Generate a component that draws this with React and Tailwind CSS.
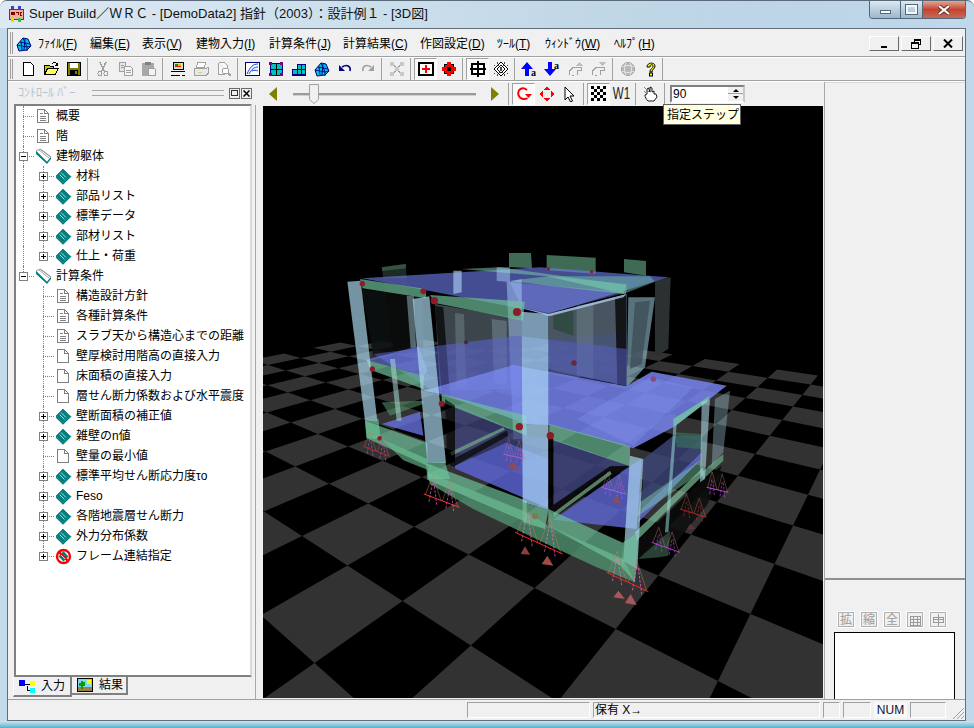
import React from "react";

/* ---------- floor homography ---------- */
function solve(A, b) {
  const n = b.length;
  const M = A.map((r, i) => [...r, b[i]]);
  for (let c = 0; c < n; c++) {
    let p = c;
    for (let r = c + 1; r < n; r++) if (Math.abs(M[r][c]) > Math.abs(M[p][c])) p = r;
    [M[c], M[p]] = [M[p], M[c]];
    for (let r = 0; r < n; r++) {
      if (r === c) continue;
      const f = M[r][c] / M[c][c];
      for (let k = c; k <= n; k++) M[r][k] -= f * M[c][k];
    }
  }
  return M.map((r, i) => r[n] / r[i]);
}
const refs = [[0, 1, 314.5, 664], [3, -1, 718, 682], [3, -3, 774.5, 565], [-2, 0, 302, 537]];
const A = [], B = [];
refs.forEach(([u, v, x, y]) => {
  A.push([u, v, 1, 0, 0, 0, -u * x, -v * x]); B.push(x);
  A.push([0, 0, 0, u, v, 1, -u * y, -v * y]); B.push(y);
});
const H = solve(A, B);
const W = (u, v) => H[6] * u + H[7] * v + 1;
const proj = (u, v) => {
  const w = W(u, v);
  return [(H[0] * u + H[1] * v + H[2]) / w, (H[3] * u + H[4] * v + H[5]) / w];
};
const tiles = [];
for (let i = -12; i < 12; i++) for (let j = -12; j < 12; j++) {
  if (((i + j) % 2 + 2) % 2 !== 1) continue;
  const cs = [[i, j], [i + 1, j], [i + 1, j + 1], [i, j + 1]];
  if (cs.some(([u, v]) => W(u, v) < 0.02)) continue;
  const ps = cs.map(([u, v]) => proj(u, v));
  if (ps.some(([x, y]) => y < 340)) continue;
  tiles.push(ps.map(([x, y]) => `${x.toFixed(1)},${y.toFixed(1)}`).join(" "));
}

/* ---------- building, in 3x coordinates of the crop at (340,240) ---------- */
const G = "rgba(112,196,155,0.68)", GD = "rgba(78,140,108,0.85)", C = "rgba(172,218,240,0.68)";
const polys = [
  ["507,42 573,42 576,88 507,84", "#3f6b55"], ["620,48 767,56 767,104 620,94", "#3f6b55"], ["852,60 918,66 918,110 852,100", "#3f6b55"],
  ["125,85 197,75 200,118 130,118", "#1e2a25"], ["125,85 197,75 198,88 127,96", "#33553f"],
  ["945,125 992,115 985,330 945,355", "#2b3030"],
  ["65,150 250,175 250,340 100,350", "rgba(12,16,16,.85)"],
  ["285,195 545,240 545,450 300,455", "rgba(85,95,105,.72)"],
  ["300,320 545,290 545,450 300,455", "rgba(80,90,170,.35)"],
  ["625,225 860,165 860,440 625,390", "rgba(78,92,104,.92)"],
  ["625,300 860,280 860,440 625,390", "rgba(70,80,150,.35)"],
  ["285,200 310,205 330,470 305,460", "rgba(0,0,0,.7)"], ["345,222 372,226 378,440 350,445", "rgba(150,170,180,.3)"],
  ["455,240 500,246 500,440 462,430", "rgba(150,175,185,.35)"], ["710,200 760,190 760,420 710,410", "rgba(130,150,160,.35)"],
  ["825,175 858,168 858,440 832,440", "rgba(10,10,10,.85)"],
  ["640,225 700,210 700,290 640,270", "rgba(40,70,55,.7)"],
  ["865,175 945,175 915,385 860,445", "rgba(160,210,225,.55)"], ["885,190 930,185 905,375 870,390", "rgba(60,75,85,.75)"],
  ["130,120 200,120 220,320 160,330", "rgba(10,10,10,.7)"], ["200,170 222,172 228,325 212,328", "rgba(170,210,225,.45)"],
  ["65,118 600,85 985,115 625,225 250,152", "rgba(110,124,235,.62)"],
  ["510,130 860,160 625,222 545,205", "rgba(135,150,245,.4)"],
  ["365,90 480,85 860,138 858,165 620,112", "rgba(120,195,170,.55)"],
  ["510,125 625,112 860,135 850,165 625,140", "rgba(115,195,165,.55)"],
  ["625,112 930,112 945,128 850,165", "rgba(110,190,170,.5)"],
  ["340,95 365,95 365,160 340,165", "rgba(180,215,250,.6)"], ["470,85 510,85 510,130 470,125", "rgba(180,215,250,.45)"],
  ["500,130 545,120 548,600 520,600", "rgba(170,205,250,.5)"],
  ["540,205 625,225 860,165 850,175 628,232", "rgba(180,210,245,.75)"],
  ["100,345 530,290 860,330 860,440 520,378 270,450", "rgba(85,95,190,.55)"],
  ["78,362 235,322 262,395 250,412", "rgba(110,125,230,.65)"],
  ["345,495 560,590 625,600 625,660 500,610 345,680", "rgba(65,70,125,.75)"],
  ["640,600 870,680 810,690 640,810", "rgba(60,65,120,.88)"],
  ["910,660 1000,590 1085,590 1085,650 905,810", "rgba(60,70,120,.82)"],
  ["250,455 520,378 860,442 935,398 1160,440 1005,562 880,628 628,558 560,555 305,465", "rgba(118,132,238,.84)"],
  ["710,540 930,415 1060,445 880,620", "rgba(140,155,250,.3)"],
  ["125,555 240,518 250,590", "rgba(105,115,225,.78)"],
  ["125,490 250,485 250,495 150,530", "rgba(90,150,110,.55)"],
  ["895,905 1090,720 1150,700 1100,800 1000,920 985,950 895,960", "rgba(14,14,14,.9)"],
  ["335,685 500,610 625,660 625,808", "rgba(90,100,210,.84)"],
  ["640,842 870,682 905,660 890,870", "rgba(90,100,205,.84)"],
  ["905,810 1065,660 1085,640 1085,660 895,850", "rgba(95,105,215,.8)"],
  ["625,808 810,682 870,680 640,835", "rgba(8,8,10,.9)"],
  ["640,822 810,695 815,705 640,835", "rgba(130,190,150,.65)"],
  ["340,660 500,575 505,590 345,680", "rgba(8,10,8,.75)"],
  ["330,640 490,565 495,572 335,650", "rgba(120,180,140,.65)"],
  ["890,960 1135,712 1145,680 1090,720 895,905", "rgba(10,10,10,.9)"],
  ["125,600 262,660 262,692 190,664", GD],
  ["262,700 560,820 625,860 850,960 885,1030 770,985 620,915 400,810 270,735", GD],
  ["895,960 990,875 985,950 960,955", "rgba(60,100,80,.6)"],
  ["75,545 262,612 262,680 80,598", G], ["258,672 560,785 560,850 262,722", G], ["625,810 850,912 850,985 625,860", G],
  ["890,905 1090,708 1090,685 885,880", "rgba(140,215,175,.62)"],
  ["900,790 1085,660 1085,700 895,830", "rgba(130,210,170,.45)"],
  ["1085,700 1150,645 1150,665 1088,722", "rgba(130,210,170,.55)"],
  ["80,362 252,412 250,450 90,392", G], ["305,465 560,530 560,590 305,490", G], ["628,555 870,622 870,682 628,600", G],
  ["1000,540 1110,470 1100,490 1000,565", "rgba(120,205,160,.72)"], ["1005,580 1085,585 1085,630 1010,625", "rgba(60,130,90,.5)"],
  ["60,120 258,150 258,178 68,148", G], ["270,168 555,188 548,245 285,192", G],
  ["22,128 62,125 112,545 75,545", C], ["218,180 268,172 318,672 262,672", C],
  ["545,218 625,225 625,812 548,790", "rgba(168,212,245,.72)"], ["150,360 165,360 185,545 170,545", "rgba(170,220,210,.55)"],
  ["870,650 910,660 892,990 850,965", C], ["1000,565 1010,555 985,880 975,880", "rgba(150,215,215,.55)"],
  ["1085,490 1110,480 1095,720 1080,730", "rgba(170,215,225,.6)"], ["1125,480 1170,455 1150,640 1115,680", "rgba(170,215,225,.35)"],
  ["625,590 640,600 640,800 625,808", "rgba(0,0,0,.88)"],
  ["315,480 345,500 345,690 322,670", "rgba(0,0,0,.6)"],
  ["75,545 115,540 122,600 80,598", G], ["548,790 625,812 615,870 548,850", G], ["262,672 315,668 330,720 265,720", G], ["850,910 895,880 885,1030 845,985", G],
];
const dots = [[67, 134, 8], [250, 157, 9], [283, 185, 11], [531, 219, 12], [97, 390, 8], [305, 494, 9], [538, 563, 11], [631, 590, 11], [119, 598, 7], [625, 90, 5], [755, 98, 5]];
const dimDots = [[702, 372, 8, "#6c2740"], [940, 420, 8, "#8c4a80"], [378, 310, 6, "#4a2535"], [585, 832, 9, "#7d7a50"]];
const supports = [
  [70, 622, 150, 652, "#e02525", "#d060e0", .8], [252, 765, 358, 805, "#ff3535", "#ff60e0", 1],
  [525, 880, 668, 945, "#ff2525", "#ff70d0", 1], [800, 1000, 925, 1058, "#ff2525", "#ff70d0", 1],
  [1020, 810, 1100, 835, "#e02525", "#e02525", .8], [935, 910, 1020, 940, "#c040e0", "#c040e0", .9],
  [1100, 745, 1165, 760, "#d050f0", "#d050f0", .9], [490, 645, 555, 660, "#e060c0", "#e060c0", .7], [785, 745, 858, 765, "#c060f0", "#c060f0", .8],
];
const tris = [["555,922 570,947 542,945", "#8a3f3f"], ["622,950 640,980 605,975", "#a04a4a"], ["835,1055 855,1080 820,1075", "#a85858"], ["872,1065 890,1098 855,1092", "#a85858"], ["520,668 540,695 500,685", "#8a4a60"], ["830,770 845,795 815,790", "#8a4a60"], ["1050,855 1068,870 1040,872", "#5a3535"]];

function Support({ s }) {
  const [x1, y1, x2, y2, c, d, op] = s;
  const len = x2 - x1, dy = y2 - y1, h = Math.max(50, len * 0.62);
  const px = (t) => x1 + len * t, py = (t) => y1 + dy * t;
  return (
    <g opacity={op} fill="none" strokeWidth="2">
      <polyline points={`${px(.04)},${py(.04)} ${px(.25)},${py(.25) - h} ${px(.48)},${py(.48)}`} stroke="#c08060" opacity=".7" />
      <polyline points={`${px(.52)},${py(.52)} ${px(.72)},${py(.72) - h} ${px(.96)},${py(.96)}`} stroke="#c08060" opacity=".7" />
      <line x1={px(.14)} y1={py(.14) + 18} x2={px(.24)} y2={py(.24) - h + 20} stroke={d} strokeDasharray="8 4" />
      <line x1={px(.36)} y1={py(.36) + 18} x2={px(.28)} y2={py(.28) - h + 20} stroke={d} strokeDasharray="8 4" />
      <line x1={px(.62)} y1={py(.62) + 18} x2={px(.72)} y2={py(.72) - h + 20} stroke={d} strokeDasharray="8 4" />
      <line x1={px(.84)} y1={py(.84) + 18} x2={px(.76)} y2={py(.76) - h + 20} stroke={d} strokeDasharray="8 4" />
      <line x1={x1} y1={y1} x2={x2} y2={y2} stroke={c} strokeWidth="3" />
    </g>
  );
}

function Scene() {
  return (
    <svg viewBox="263 107 560 592" className="block w-[560px] h-[592px]">
      <rect x="263" y="107" width="560" height="592" fill="#000" />
      {tiles.map((p, i) => <polygon key={i} points={p} fill="#323232" />)}
      <g transform="translate(340 240) scale(.33333)">
        {polys.map(([p, f], i) => <polygon key={i} points={p} fill={f} />)}
        {dots.map(([x, y, r], i) => <circle key={i} cx={x} cy={y} r={r} fill="#8c1c2c" />)}
        {dimDots.map(([x, y, r, f], i) => <circle key={i} cx={x} cy={y} r={r} fill={f} />)}
        {supports.map((s, i) => <Support key={i} s={s} />)}
        {tris.map(([p, f], i) => <polygon key={i} points={p} fill={f} />)}
      </g>
    </svg>
  );
}

/* ---------- small icons ---------- */
const S = ({ children, w = 16, h = 16 }) => <svg width={w} height={h} viewBox={`0 0 ${w} ${h}`} shapeRendering="crispEdges" className="block">{children}</svg>;
const Gy = "#a0a0a0";
const icons = {
  new: <S><path d="M3.5 1.5h7l3 3v10h-10z" fill="#fff" stroke="#000" /></S>,
  open: <S><path d="M1.5 13.5v-9h5l1 1h3v8z" fill="#c8c800" stroke="#000" /><path d="M1.5 13.5l3-6h11l-3.5 6z" fill="#ffff60" stroke="#000" /><path d="M9 3c2-2 3-2 5 0" fill="none" stroke="#000" /><path d="M15 1v4h-3z" fill="#000" /></S>,
  save: <S><rect x="1.5" y="1.5" width="13" height="13" fill="#808000" stroke="#000" /><rect x="4" y="2" width="8" height="5" fill="#fff" /><rect x="4" y="9" width="8" height="5" fill="#000" /><rect x="9" y="10" width="2" height="3" fill="#808000" /></S>,
  cut: <S><path d="M5 1l4 9M11 1l-4 9" stroke={Gy} strokeWidth="1.5" /><circle cx="5" cy="12.5" r="2" fill="none" stroke={Gy} /><circle cx="11" cy="12.5" r="2" fill="none" stroke={Gy} /></S>,
  copy: <S><path d="M1.5 1.5h6v9h-6z" fill="#e4e4e4" stroke={Gy} /><path d="M6.5 5.5h6l2 2v7h-8z" fill="#f4f4f4" stroke={Gy} /><path d="M3 4h3M3 6h3M8 9h5M8 11h5" stroke={Gy} /></S>,
  paste: <S><rect x="1" y="2" width="12" height="13" rx="1" fill="#a8a8a8" /><rect x="4" y="1" width="6" height="3" fill="#808080" /><path d="M7.5 7.5h6l1 1v6h-7z" fill="#f4f4f4" stroke={Gy} /></S>,
  setup: <S><rect x="3.5" y="1.5" width="10" height="7" fill="#d0e0d0" stroke="#000" /><rect x="5" y="3" width="3" height="2" fill="#00a000" /><rect x="8" y="3" width="3" height="2" fill="#e0c000" /><rect x="5" y="5" width="6" height="1" fill="#e02020" /><path d="M1 10h14M1 14h9M12 14h3" stroke="#000" /></S>,
  print: <S><path d="M4.5 1.5h8l-1 5h-8z" fill="#fff" stroke={Gy} /><path d="M1.5 7.5h12l1.5-1v6l-1.5 1.5h-12z" fill="#e8e8e8" stroke={Gy} /><rect x="5" y="11" width="4" height="1" fill="#d8d060" /></S>,
  prev: <S><path d="M2.5 1.5h6l3 3v4M2.5 1.5v12h6" fill="#f8f8f8" stroke={Gy} /><circle cx="9.5" cy="10" r="3" fill="#fff" stroke={Gy} /><path d="M12 12l3 3" stroke={Gy} strokeWidth="2" /></S>,
  chart: <svg width="16" height="16" viewBox="0 0 16 16" className="block"><rect x=".5" y="1.5" width="14" height="13" fill="#fff" stroke="#000080" /><path d="M2 13C5 6 8 3 13 3M4 13C7 8 9 6 13 6M7 10c2-1 4-1 6 0" fill="none" stroke="#0040e0" /></svg>,
  grid: <S><rect x="2" y="2" width="12" height="12" fill="#00c0c0" stroke="#000080" /><path d="M8 2v12M2 8h12" stroke="#000" /><path d="M1 1h3v3H1zM12 1h3v3h-3zM1 12h3v3H1zM12 12h3v3h-3z" fill="#800080" /></S>,
  stairs: <S><path d="M1 13V8h5V3h8v10z" fill="#00c0c0" stroke="#000080" /><path d="M6 8v5M10 3v10M6 8h8" stroke="#000080" /><rect x="1" y="13" width="14" height="2" fill="#000080" /></S>,
  bldg: <svg width="16" height="16" viewBox="0 0 16 16" className="block"><path d="M1 9l6-7 5 1 3 7-4 4-8 1z" fill="#00c0e0" stroke="#000080" /><path d="M1 9l10 2v4M7 2l4 9M4 6l10 2M5 5.500l1 8.500M9 3l-1 11M11 11l4-1" stroke="#000080" fill="none" strokeWidth=".9" /></svg>,
  undo: <svg width="16" height="16" viewBox="0 0 16 16" className="block"><path d="M5 6c5-3 9-1 8 4" fill="none" stroke="#000080" strokeWidth="1.6" /><path d="M2 4v6h6z" fill="#000080" /></svg>,
  redo: <svg width="16" height="16" viewBox="0 0 16 16" className="block"><path d="M11 6c-5-3-9-1-8 4" fill="none" stroke={Gy} strokeWidth="1.6" /><path d="M14 4v6H8z" fill={Gy} /></svg>,
  nodes: <S><path d="M4 3l4 5-4 5M12 3L8 8l4 5" fill="none" stroke={Gy} /><path d="M1 1h4v4H1zM11 1h4v4h-4zM1 11h4v4H1zM11 11h4v4h-4zM6 6h4v4H6z" fill="#c8c8c8" /></S>,
  ring: <S><rect x="1" y="2" width="14" height="12" fill="#fff" stroke="#000" strokeWidth="2" /><path d="M7 4h2v3h3v2H9v3H7V9H4V7h3z" fill="#ff0000" /></S>,
  redx: <S><rect x="3" y="3" width="10" height="10" fill="#000" /><path d="M6 1h4v3h2v2h3v4h-3v2h-2v3H6v-3H4v-2H1V6h3V4h2z" fill="#ff0000" /><rect x="6" y="6" width="4" height="4" fill="#000" /></S>,
  hash: <S><rect x="2" y="3" width="12" height="10" fill="#fff" stroke="#000" strokeWidth="2" /><path d="M8 0v16M0 8h16" stroke="#000" strokeWidth="2" /></S>,
  lattice: <S><path d="M8 1l7 7-7 7-7-7z" fill="#fff" stroke="#000" /><path d="M8 4l4 4-4 4-4-4z" fill="none" stroke="#000" /><path d="M4 1l8 14M12 1L4 15M1 4h1M14 4h1M1 12h1M14 12h1" stroke="#000" strokeWidth=".7" /></S>,
  upa: <svg width="18" height="16" viewBox="0 0 18 16" className="block"><path d="M6 1l6 7H8v7H4V8H0z" fill="#0000ff" /><text x="10" y="15" fontSize="10" fontWeight="700" fontFamily="Liberation Serif" fill="#000">a</text></svg>,
  downa: <svg width="18" height="16" viewBox="0 0 18 16" className="block"><path d="M6 15L0 8h4V1h4v7h4z" fill="#0000ff" /><text x="10" y="8" fontSize="10" fontWeight="700" fontFamily="Liberation Serif" fill="#000">a</text></svg>,
  stepU: <S><path d="M1.500 14V10l4-4h8v3H9v5M4 14h2" fill="none" stroke={Gy} /><path d="M11 1l4 4H7z" fill="#c0c0c0" /></S>,
  stepD: <S><path d="M1.500 14V10l4-4h8v3H9v5M4 14h2" fill="none" stroke={Gy} /><path d="M11 5l4-4H7z" fill="#c0c0c0" /></S>,
  globe: <svg width="16" height="16" viewBox="0 0 16 16" className="block"><circle cx="8" cy="8" r="6.500" fill="#b8b8b8" stroke="#a0a0a0" /><path d="M2 6c4-2 8-2 12 0M2 10c4 2 8 2 12 0M6 2c-2 4-2 8 0 12M10 2c2 4 2 8 0 12" stroke="#e8e8e8" fill="none" /></svg>,
  help: <svg width="16" height="16" viewBox="0 0 16 16" className="block"><path d="M4 6c0-5 8-5 8-1 0 3-3 3-3 6H7c0-4 3-3 3-6 0-2-3-2-3 1z" fill="#ffff00" stroke="#000" /><rect x="6.500" y="12" width="3" height="3" fill="#ffff00" stroke="#000" /></svg>,
  rot: <svg width="16" height="16" viewBox="0 0 16 16" className="block"><path d="M11 4C6 0 1 4 2.500 9c1 4 6 5 9 3" fill="none" stroke="#ff0000" strokeWidth="2" /><path d="M9 8h7l-3.500 4z" fill="#ff0000" /></svg>,
  move: <S><path d="M8 0l3 4H5zM8 16l-3-4h6zM0 8l4-3v6zM16 8l-4 3V5z" fill="#ff0000" /></S>,
  cursor: <svg width="16" height="16" viewBox="0 0 16 16" className="block"><path d="M3 1l9 9H8l2.500 5-2 1L6 11l-3 3z" fill="#fff" stroke="#000" /></svg>,
  checker: <S>{[[0, 0], [6, 0], [12, 0], [3, 3], [9, 3], [0, 6], [6, 6], [12, 6], [3, 9], [9, 9], [0, 12], [6, 12], [12, 12]].map(([x, y], i) => <rect key={i} x={x} y={y} width="3" height="3" fill="#000" />)}</S>,
  hand: <svg width="16" height="16" viewBox="0 0 16 16" className="block"><path d="M5 15c-2-2-3-4-3-6l2-1V3l1.500-1L7 6V1l2 1v4l2-1v3l2 0 1 3-3 4z" fill="#fff" stroke="#000" strokeWidth=".9" /><path d="M1 1l5 5M1 5l2 2" stroke="#808080" /></svg>,
};

const Sep = () => <div className="w-[6px] h-[22px] flex justify-center"><div className="w-[2px] h-full border-l border-[#a0a0a0] border-r-white" /></div>;
const Btn = ({ i, on }) => (
  <div className={on ? "w-[23px] h-[22px] flex items-center justify-center bg-[#fafafa] border border-t-[#a0a0a0] border-l-[#a0a0a0] border-r-white border-b-white" : "w-[23px] h-[22px] flex items-center justify-center"}>{icons[i]}</div>
);

const tb1 = ["new", "open", "save", 0, "cut", "copy", "paste", 0, "setup", "print", "prev", 0, "chart", "grid", "stairs", "bldg", "undo", "redo", 0, "nodes", 0, "*ring", "redx", 0, "*hash", "lattice", 0, "upa", "downa", "stepU", "stepD", 0, "globe", "help"];

const U = ({ a, k, z }) => <>{a}(<u>{k}</u>){z}</>;
const menu = [
  ["ﾌｧｲﾙ", "F", "w-[52px]"], ["編集", "E", "w-[52px]"], ["表示", "V", "w-[54px]"], ["建物入力", "I", "w-[73px]"], ["計算条件", "J", "w-[74px]"],
  ["計算結果", "C", "w-[77px]"], ["作図設定", "D", "w-[77px]"], ["ﾂｰﾙ", "T", "w-[48px]"], ["ｳｨﾝﾄﾞｳ", "W", "w-[69px]"], ["ﾍﾙﾌﾟ", "H", "w-[60px]"],
];

/* ---------- tree ---------- */
const Doc = ({ lines }) => (
  <svg width="16" height="16" viewBox="0 0 16 16" shapeRendering="crispEdges" className="block">
    <path d="M2.500 1.500h7l4 4v9h-11z" fill="#fff" stroke="#808080" />
    <path d="M9.500 1.500v4h4" fill="none" stroke="#808080" />
    {lines && <path d="M5 5h3M5 8h6M5 10h6M5 12h6" stroke="#808080" />}
  </svg>
);
const Book = () => (
  <svg width="17" height="17" viewBox="0 0 17 17" className="block">
    <path d="M8 1l7 7-7 7-7-7z" fill="#008080" stroke="#006060" strokeWidth=".6" />
    <path d="M6 4.500l5 5M4.500 6.500l5 5" stroke="#b8e8e0" strokeWidth=".9" />
    <path d="M1 9l7 7 8-8" fill="none" stroke="#008080" strokeWidth="1.200" />
  </svg>
);
const Books = () => (
  <svg width="17" height="17" viewBox="0 0 17 17" className="block">
    <path d="M1 3l4-2 11 8-4 5z" fill="#fff" stroke="#808080" strokeWidth=".8" />
    <path d="M4 2l10 8M6 1.500l9 7" stroke="#808080" strokeWidth=".7" />
    <path d="M1 3v3l11 10 4-5V9l-4 5z" fill="#008080" />
  </svg>
);
const Stop = () => (
  <svg width="17" height="17" viewBox="0 0 17 17" className="block">
    <path d="M8.500 3l5 5.500-5 5-5-5z" fill="#008080" />
    <circle cx="8.500" cy="8.500" r="6.500" fill="none" stroke="#ff0000" strokeWidth="2.400" />
    <path d="M4 4l9 9" stroke="#ff0000" strokeWidth="2.400" />
    <path d="M6 7l4 4" stroke="#fff" strokeWidth=".8" />
  </svg>
);
const Exp = ({ open }) => (
  <div className="w-[9px] h-[9px] border border-[#808080] bg-white relative flex items-center justify-center">
    <div className="w-[5px] h-px bg-black" />
    {!open && <div className="w-px h-[5px] bg-black absolute" />}
  </div>
);
const rows = [
  [0, "doc", "概要"], [0, "doc", "階"], [0, "books", "建物躯体", "open"],
  [1, "book", "材料", "plus"], [1, "book", "部品リスト", "plus"], [1, "book", "標準データ", "plus"], [1, "book", "部材リスト", "plus"], [1, "book", "仕上・荷重", "plus"],
  [0, "books", "計算条件", "open"],
  [1, "doc", "構造設計方針"], [1, "doc", "各種計算条件"], [1, "doc", "スラブ天から構造心までの距離"],
  [1, "blank", "壁厚検討用階高の直接入力"], [1, "blank", "床面積の直接入力"], [1, "blank", "層せん断力係数および水平震度"],
  [1, "book", "壁断面積の補正値", "plus"], [1, "book", "雑壁のn値", "plus"], [1, "blank", "壁量の最小値"],
  [1, "book", "標準平均せん断応力度τo", "plus"], [1, "book", "Feso", "plus"], [1, "book", "各階地震層せん断力", "plus"], [1, "book", "外力分布係数", "plus"], [1, "stop", "フレーム連結指定", "plus"],
];
const treeIcon = { doc: <Doc lines />, blank: <Doc />, book: <Book />, books: <Books />, stop: <Stop /> };

function Row({ r, idx }) {
  const [lvl, ic, text, ex] = r;
  const v0full = idx < 8, v0half = idx === 8;
  const v1full = (idx >= 3 && idx < 7) || (idx >= 9 && idx < 22), v1half = idx === 7 || idx === 22;
  return (
    <div className="relative h-[20px] flex items-center">
      {(v0full || v0half) && <div className={v0full ? "absolute left-[7px] top-0 h-[20px] border-l border-dotted border-[#808080]" : "absolute left-[7px] top-0 h-[10px] border-l border-dotted border-[#808080]"} />}
      {(v1full || v1half) && <div className={v1full ? "absolute left-[27px] top-0 h-[20px] border-l border-dotted border-[#808080]" : "absolute left-[27px] top-0 h-[10px] border-l border-dotted border-[#808080]"} />}
      <div className={lvl ? "absolute left-[27px] top-[10px] w-[11px] border-t border-dotted border-[#808080]" : "absolute left-[7px] top-[10px] w-[11px] border-t border-dotted border-[#808080]"} />
      {ex && <div className={lvl ? "absolute left-[23px] top-[6px]" : "absolute left-[3px] top-[6px]"}><Exp open={ex === "open"} /></div>}
      <div className={lvl ? "ml-[39px] w-[21px]" : "ml-[19px] w-[21px]"}>{treeIcon[ic]}</div>
      <span className="text-[12px] leading-none text-black whitespace-nowrap">{text}</span>
    </div>
  );
}

const Triangle = ({ dir }) => (
  <svg width="8" height="14" viewBox="0 0 8 14" className="block">
    <path d={dir === "l" ? "M8 0v14L0 7z" : "M0 0v14l8-7z"} fill="#808000" />
  </svg>
);

const WinBtn = ({ className, children }) => <div className={className}>{children}</div>;
const MdiBtn = ({ children }) => (
  <div className="w-[30px] h-[15px] bg-[#f0f0f0] border border-t-white border-l-white border-r-[#696969] border-b-[#696969] flex items-center justify-center">{children}</div>
);
const Cell = ({ className, children }) => (
  <div className={`h-[16px] border border-t-[#a0a0a0] border-l-[#a0a0a0] border-r-white border-b-white ${className}`}>{children}</div>
);
const Mini = ({ children }) => (
  <div className="w-[16px] h-[15px] border border-[#b0b0b0] outline outline-white flex items-center justify-center text-[12px] leading-none text-[#9a9a9a]">{children}</div>
);

export default function App() {
  return (
    <div className="w-[974px] h-[728px] overflow-hidden flex flex-col bg-linear-to-r from-[#c4dbec] via-[#aac7dd] to-[#c0d8ea] rounded-t-[7px] border-t border-[#5a6a78] font-['Liberation_Sans','Noto_Sans_CJK_JP',sans-serif] text-black">
      {/* title */}
      <div className="h-[27px] flex relative shrink-0 bg-linear-to-r from-[#dde9f3] via-[#c6dbea] to-transparent">
        <div className="ml-[8px] mt-[5px] w-[16px] h-[16px] shrink-0">
          <svg width="16" height="16" viewBox="0 0 16 16" shapeRendering="crispEdges" className="block">
            <rect x="3" y="0" width="3" height="4" fill="#4040c0" /><rect x="10" y="0" width="3" height="4" fill="#4040c0" />
            <rect x="1" y="3" width="14" height="10" fill="#f0b0a0" stroke="#a02020" />
            <rect x="3" y="12" width="3" height="4" fill="#e0e000" /><rect x="10" y="12" width="3" height="4" fill="#40c040" />
            <path d="M3 6l1 3 1-3 1 3 1-3M8 6h2v3M12 6h2M12 6v3h2" stroke="#800000" fill="none" />
          </svg>
        </div>
        <div className="ml-[5px] mt-[5px] text-[13px] leading-[16px] text-[#111] whitespace-nowrap">Super Build／ＷＲＣ - [DemoData2] 指針（2003）：設計例１ - [3D図]</div>
        <div className="ml-auto mr-[8px] flex h-[18px] rounded-b-[4px] overflow-hidden border border-t-0 border-[#50687a]">
          <WinBtn className="w-[31px] bg-linear-to-b from-[#dce8f1] to-[#9db7cb] flex items-center justify-center border-r border-[#50687a]">
            <div className="w-[11px] h-[4px] bg-white border border-[#50687a] mt-[5px]" />
          </WinBtn>
          <WinBtn className="w-[22px] bg-linear-to-b from-[#dce8f1] to-[#9db7cb] flex items-center justify-center border-r border-[#50687a]">
            <div className="w-[11px] h-[9px] border-2 border-[#f4f8fb] outline outline-[#50687a]" />
          </WinBtn>
          <WinBtn className="w-[42px] bg-linear-to-b from-[#e2a597] via-[#c4432f] to-[#c8695a] flex items-center justify-center text-[13px] leading-none font-bold text-white">
            <svg width="14" height="10" viewBox="0 0 14 10" className="block"><path d="M2 1l10 8M12 1L2 9" stroke="#5a2a20" strokeWidth="3.800" /><path d="M2 1l10 8M12 1L2 9" stroke="#fff" strokeWidth="2.200" /></svg>
          </WinBtn>
        </div>
      </div>

      {/* client */}
      <div className="ml-[7px] w-[959px] h-[693px] shrink-0 border border-[#646e78] bg-[#f0f0f0] flex flex-col">
        {/* menu */}
        <div className="h-[28px] shrink-0 flex items-center border-b border-[#a0a0a0] relative">
          <div className="ml-[2px] w-[3px] h-[22px] border-x border-[#a0a0a0]" />
          <div className="ml-[3px] w-[16px] mt-[2px]">{icons.bldg}</div>
          <div className="ml-[6px] mt-[3px] flex text-[12px] leading-none text-black">
            {menu.map(([t, k, w]) => <div key={k} className={`${w} whitespace-nowrap`}><U a={t} k={k} /></div>)}
          </div>
          <div className="ml-auto mr-[2px] mt-[2px] flex gap-[2px]">
            <MdiBtn><div className="w-[6px] h-[2px] bg-black mt-[6px]" /></MdiBtn>
            <MdiBtn>
              <svg width="10" height="10" viewBox="0 0 10 10" shapeRendering="crispEdges" className="block"><path d="M3 .5h6.500v5H8M3 .5v2" fill="none" stroke="#000" /><rect x=".5" y="3" width="6.500" height="6" fill="none" stroke="#000" /><path d="M3 1h6M1 4h6" stroke="#000" /></svg>
            </MdiBtn>
            <MdiBtn>
              <svg width="10" height="9" viewBox="0 0 10 9" className="block"><path d="M1 .5l8 8M9 .5l-8 8" stroke="#000" strokeWidth="2" /></svg>
            </MdiBtn>
          </div>
        </div>
        {/* toolbar 1 */}
        <div className="h-[24px] shrink-0 flex items-center border-t border-white border-b border-b-[#a0a0a0]">
          <div className="ml-[2px] w-[3px] h-[20px] border-x border-[#a0a0a0]" />
          <div className="ml-[3px] flex items-center">
            {tb1.map((t, i) => t === 0 ? <Sep key={i} /> : <Btn key={i} i={t.replace("*", "")} on={t[0] === "*"} />)}
            <div className="ml-[0px] w-px h-[23px] bg-[#a0a0a0]" />
          </div>
        </div>
        {/* body */}
        <div className="flex-1 flex min-h-0 border-t border-white">
          {/* left */}
          <div className="w-[247px] shrink-0 flex flex-col">
            <div className="h-[22px] shrink-0 flex items-center">
              <span className="ml-[10px] w-[74px] text-[12px] leading-none text-[#b4c4d4] whitespace-nowrap">ｺﾝﾄﾛｰﾙ ﾊﾞｰ</span>
              <div className="w-[132px] h-[6px] border-y border-[#a8a8a8]" />
              <div className="ml-[5px] w-[11px] h-[11px] border border-[#696969] bg-[#f0f0f0] flex items-center justify-center"><div className="w-[7px] h-[6px] border border-[#303030]" /></div>
              <div className="ml-[1px] w-[11px] h-[11px] border border-[#696969] bg-[#f0f0f0] flex items-center justify-center">
                <svg width="7" height="7" viewBox="0 0 7 7" className="block"><path d="M.5.500l6 6M6.500.500l-6 6" stroke="#000" strokeWidth="1.500" /></svg>
              </div>
            </div>
            <div className="ml-[6px] w-[238px] h-[573px] shrink-0 border-2 border-t-[#808080] border-l-[#808080] border-r-[#d8d8d8] border-b-[#808080] bg-white relative">
              {rows.map((r, i) => <Row key={i} r={r} idx={i} />)}
            </div>
            <div className="ml-[5px] flex items-start">
              <div className="w-[59px] h-[20px] bg-[#f0f0f0] border-r-2 border-b-2 border-[#808080] border-l border-l-white flex items-center">
                <svg width="17" height="14" viewBox="0 0 17 14" shapeRendering="crispEdges" className="ml-[5px] block">
                  <rect x="0" y="1" width="6" height="6" fill="#0000ff" /><rect x="11" y="2" width="5" height="5" fill="#ffff00" /><rect x="11" y="9" width="5" height="5" fill="#00ffff" />
                  <path d="M6 5h5M8 7v4h3" stroke="#000" fill="none" />
                </svg>
                <span className="ml-[5px] text-[12px] leading-none">入力</span>
              </div>
              <div className="w-[56px] h-[18px] bg-[#f0f0f0] border-r-2 border-b-2 border-[#808080] flex items-center">
                <svg width="16" height="14" viewBox="0 0 16 14" shapeRendering="crispEdges" className="ml-[5px] block">
                  <rect x=".5" y=".5" width="15" height="13" fill="#7fd8f0" stroke="#000" /><rect x="1" y="9" width="14" height="4" fill="#a08040" />
                  <path d="M5 3v8M3 5v2h4V4" stroke="#00a000" fill="none" strokeWidth="1.500" /><rect x="10" y="2" width="4" height="4" fill="#ffff00" />
                </svg>
                <span className="ml-[6px] text-[12px] leading-none">結果</span>
              </div>
            </div>
          </div>
          {/* splitter */}
          <div className="w-[8px] shrink-0 border-l border-[#a8a8a8] mt-[23px]" />
          {/* center */}
          <div className="w-[560px] shrink-0 flex flex-col relative">
            <div className="h-[24px] shrink-0 flex items-center relative">
              <div className="ml-[6px] w-[8px]"><Triangle dir="l" /></div>
              <div className="ml-[16px] w-[183px] h-[3px] bg-[#9a9a9a] border-b border-[#d0d0d0] relative">
                <div className="absolute left-[16px] top-[-9px] w-[10px] h-[20px]">
                  <svg width="10" height="20" viewBox="0 0 10 20" className="block"><path d="M.5.500h9v15l-4.500 4-4.500-4z" fill="#f0f0f0" stroke="#a0a0a0" /></svg>
                </div>
              </div>
              <div className="ml-[15px] w-[8px]"><Triangle dir="r" /></div>
              <div className="ml-[7px] flex items-center">
                <Sep />
                <Btn i="rot" on />
                <Btn i="move" />
                <Btn i="cursor" />
                <Sep />
                <Btn i="checker" on />
                <div className="w-[23px] h-[22px] flex items-center justify-center text-[16px] leading-none font-light scale-x-[.72] text-[#222] whitespace-nowrap">W1</div>
                <Sep />
                <Btn i="hand" />
                <Sep />
              </div>
              <div className="ml-[2px] w-[75px] h-[18px] border-2 border-t-[#808080] border-l-[#808080] border-r-[#c8c8c8] border-b-white bg-white flex">
                <span className="ml-[1px] text-[12px] leading-[14px] text-black">90</span>
                <div className="ml-auto w-[15px] flex flex-col bg-[#f0f0f0]">
                  <div className="h-[7px] border-b border-[#a0a0a0] flex items-center justify-center"><div className="w-0 h-0 border-x-[3px] border-x-transparent border-b-[3px] border-b-black" /></div>
                  <div className="h-[7px] flex items-center justify-center"><div className="w-0 h-0 border-x-[3px] border-x-transparent border-t-[3px] border-t-black" /></div>
                </div>
              </div>
            </div>
            <div className="h-[592px] shrink-0 border-t-0"><Scene /></div>
            <div className="absolute left-[400px] top-[22px] w-[78px] h-[21px] bg-[#ffffe1] border border-[#606060] flex items-center pl-[3px] text-[12px] leading-none whitespace-nowrap z-10">指定ステップ</div>
          </div>
          {/* right */}
          <div className="flex-1 flex flex-col border-l border-[#a8a8a8] ml-[1px]">
            <div className="h-[498px] shrink-0 border-b-2 border-[#909090] border-t border-t-[#d8d8d8] mt-[0px]" />
            <div className="mt-[32px] ml-[13px] flex gap-[7px]">
              <Mini>拡</Mini><Mini>縮</Mini><Mini>全</Mini>
              <Mini>
                <svg width="12" height="12" viewBox="0 0 12 12" shapeRendering="crispEdges" className="block"><path d="M1 2h10v9H1zM4 2v9M8 2v9M1 5h10M1 8h10" fill="none" stroke="#9a9a9a" /></svg>
              </Mini>
              <Mini>
                <svg width="12" height="12" viewBox="0 0 12 12" shapeRendering="crispEdges" className="block"><path d="M1 3h10v5H1zM6 0v12M1 5.500h10" fill="none" stroke="#9a9a9a" /></svg>
              </Mini>
            </div>
            <div className="mt-[5px] ml-[9px] w-[121px] flex-1 bg-white border-t border-x border-black" />
          </div>
        </div>
        {/* status */}
        <div className="h-[21px] shrink-0 border-t border-[#a0a0a0] flex items-center relative">
          <div className="w-[459px]" />
          <Cell className="w-[123px]" />
          <div className="w-[3px]" />
          <Cell className="w-[227px] pl-[1px] text-[12px] leading-[14px] whitespace-nowrap">保有 X→</Cell>
          <div className="w-[3px]" />
          <Cell className="w-[17px]" />
          <div className="w-[3px]" />
          <Cell className="w-[28px]" />
          <div className="w-[3px]" />
          <div className="w-[33px] h-[16px] bg-[#f8f8f8] text-[12px] leading-[16px] text-center text-[#101030]">NUM</div>
          <div className="w-[3px]" />
          <Cell className="w-[36px]" />
          <div className="ml-auto mr-[1px] mt-[5px]">
            <svg width="12" height="12" viewBox="0 0 12 12" className="block"><path d="M12 1L1 12M12 5l-7 7M12 9l-3 3" stroke="#a0a0a0" /></svg>
          </div>
        </div>
      </div>
      {/* bottom frame */}
      <div className="flex-1 bg-linear-to-b from-[#cfe4ef] to-[#4bb4cd]" />
    </div>
  );
}
